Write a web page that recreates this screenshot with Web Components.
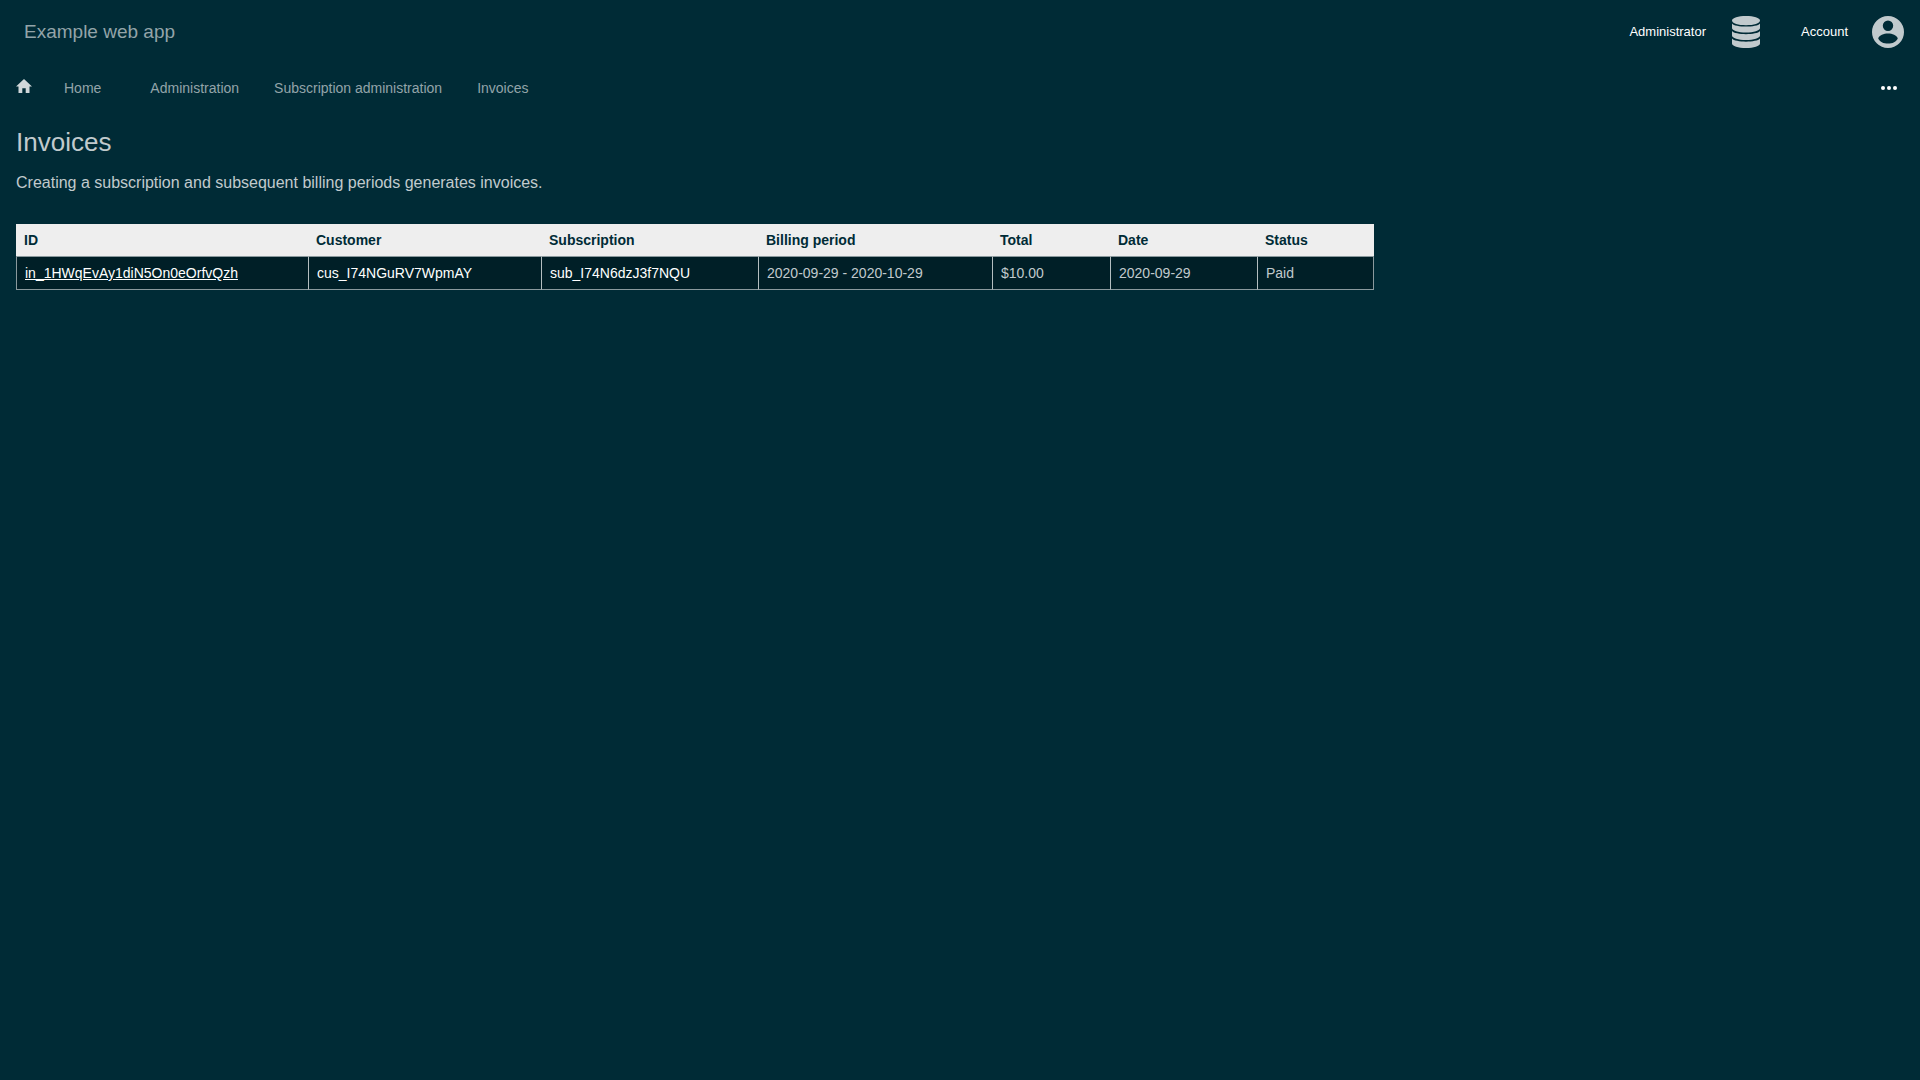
<!DOCTYPE html>
<html lang="en">
<head>
<meta charset="utf-8">
<title>Invoices</title>
<style>
html, body { margin: 0; min-height: 100%; }
body {
  background: #002b36;
  color: #c1cacd;
  font-family: "Liberation Sans", Arial, sans-serif;
  font-size: 16px;
}
</style>
</head>
<body>
<app-shell>
  <app-header slot="header" name="Example web app">
    <header-menu label="Administrator" icon="database"></header-menu>
    <header-menu label="Account" icon="account"></header-menu>
  </app-header>
  <app-navbar slot="nav">
    <a href="#home" class="first">Home</a>
    <a href="#administration">Administration</a>
    <a href="#subscriptions">Subscription administration</a>
    <a href="#invoices">Invoices</a>
  </app-navbar>
  <page-intro heading="Invoices">Creating a subscription and subsequent billing periods generates invoices.</page-intro>
  <invoice-table></invoice-table>
</app-shell>
<script>
const icons = {
  database: '<svg width="28" height="32" viewBox="0 0 28 32" fill="currentColor" aria-hidden="true"><path d="M0 4.500C0 2 6.300 0 14 0S28 2 28 4.500C28 7.500 21.700 9.200 14 9.200S0 7.500 0 4.500Z"/><path d="M0 7.400C3 11.600 25 11.600 28 7.400V12C28 14.500 21.700 16.500 14 16.500S0 14.500 0 12Z"/><path d="M0 15C3 19.200 25 19.200 28 15V19.500C28 22 21.700 24 14 24S0 22 0 19.500Z"/><path d="M0 22.600C3 26.800 25 26.800 28 22.600V27.500C28 30 21.700 32 14 32S0 30 0 27.500Z"/></svg>',
  account: '<svg width="32" height="32" viewBox="0 0 32 32" fill="currentColor" aria-hidden="true"><path fill-rule="evenodd" d="M16 0a16 16 0 1 0 0 32a16 16 0 0 0 0-32ZM16 4.500a5.200 5.200 0 1 1 0 10.400a5.200 5.200 0 0 1 0-10.400ZM6.200 22.200C8.500 15.800 23.500 15.800 25.800 22.200C23.500 29.400 8.500 29.400 6.200 22.200Z"/></svg>'
};

class AppShell extends HTMLElement {
  connectedCallback() {
    this.attachShadow({ mode: 'open' }).innerHTML = `
      <style>
        :host { display: flex; flex-direction: column; }
        main { display: flex; flex-direction: column; align-items: flex-start; gap: 28px; padding: 14px 16px; }
      </style>
      <slot name="header"></slot>
      <slot name="nav"></slot>
      <main><slot></slot></main>`;
  }
}
customElements.define('app-shell', AppShell);

class AppHeader extends HTMLElement {
  connectedCallback() {
    this.attachShadow({ mode: 'open' }).innerHTML = `
      <style>
        :host { display: block; }
        header { display: flex; align-items: center; justify-content: space-between; height: 64px; padding: 0 16px 0 24px; }
        a { color: #93a4a9; font-size: 19px; text-decoration: none; }
        nav { display: flex; gap: 39px; }
      </style>
      <header>
        <a href="#home">${this.getAttribute('name')}</a>
        <nav aria-label="User"><slot></slot></nav>
      </header>`;
  }
}
customElements.define('app-header', AppHeader);

class HeaderMenu extends HTMLElement {
  connectedCallback() {
    this.attachShadow({ mode: 'open' }).innerHTML = `
      <style>
        :host { display: block; }
        button { display: flex; align-items: center; gap: 24px; border: 0; padding: 0; background: none; color: #fff; font: inherit; font-size: 13px; line-height: 16px; cursor: pointer; }
        .icon { display: flex; justify-content: center; width: 32px; color: #c1cacd; }
      </style>
      <button type="button"><span>${this.getAttribute('label')}</span><span class="icon">${icons[this.getAttribute('icon')]}</span></button>`;
  }
}
customElements.define('header-menu', HeaderMenu);

class AppNavbar extends HTMLElement {
  connectedCallback() {
    this.attachShadow({ mode: 'open' }).innerHTML = `
      <style>
        :host { display: block; }
        nav { display: flex; align-items: center; height: 48px; padding: 0 16px; font-size: 14px; }
        ::slotted(a) { color: #93a4a9; text-decoration: none; margin-right: 35px; }
        ::slotted(a.first) { margin-left: 32px; margin-right: 49px; }
        .home { display: flex; color: #d0d7d9; padding-bottom: 4px; }
        button { display: flex; margin-left: auto; width: 30px; height: 32px; padding: 0; border: 0; background: none; color: #fff; align-items: center; justify-content: center; cursor: pointer; }
      </style>
      <nav aria-label="Breadcrumb">
        <a class="home" href="#home" aria-label="Home page"><svg width="16" height="14" viewBox="0 0 16 14" fill="currentColor"><path d="M8 0 16 7.600H13.500V14H9.700V9.200H6.300V14H2.500V7.600H0Z"/></svg></a>
        <slot></slot>
        <button type="button" aria-label="More"><svg width="16" height="4" viewBox="0 0 16 4" fill="currentColor"><circle cx="2" cy="2" r="2"/><circle cx="8" cy="2" r="2"/><circle cx="14" cy="2" r="2"/></svg></button>
      </nav>`;
  }
}
customElements.define('app-navbar', AppNavbar);

class PageIntro extends HTMLElement {
  connectedCallback() {
    this.attachShadow({ mode: 'open' }).innerHTML = `
      <style>
        :host { display: block; }
        h1 { margin: 0 0 12px; font-size: 26px; line-height: 32px; font-weight: normal; }
        p { margin: 0; font-size: 16px; line-height: 26px; }
      </style>
      <h1>${this.getAttribute('heading')}</h1>
      <p><slot></slot></p>`;
  }
}
customElements.define('page-intro', PageIntro);

class InvoiceTable extends HTMLElement {
  connectedCallback() {
    const columns = [['ID', 292], ['Customer', 233], ['Subscription', 217], ['Billing period', 234], ['Total', 118], ['Date', 147], ['Status', 117]];
    const rows = [{
      id: 'in_1HWqEvAy1diN5On0eOrfvQzh',
      customer: 'cus_I74NGuRV7WpmAY',
      subscription: 'sub_I74N6dzJ3f7NQU',
      period: '2020-09-29 - 2020-10-29',
      total: '$10.00',
      date: '2020-09-29',
      status: 'Paid'
    }];
    this.attachShadow({ mode: 'open' }).innerHTML = `
      <style>
        :host { display: block; }
        table { border-collapse: separate; border-spacing: 0; font-size: 14px; line-height: 16px; }
        th, td { box-sizing: border-box; padding: 8px; text-align: left; white-space: nowrap; }
        th { background: #eee; color: #002b36; }
        td { background: #001f27; border: 1px solid #8a999d; border-right: 0; }
        td + td { border-left-color: #b4bec0; }
        td:last-child { border-right: 1px solid #8a999d; }
        a { color: #fff; text-decoration: none; }
        a.invoice { text-decoration: underline; }
      </style>
      <table>
        <colgroup>${columns.map(([, w]) => `<col style="width:${w}px">`).join('')}</colgroup>
        <thead><tr>${columns.map(([c]) => `<th scope="col">${c}</th>`).join('')}</tr></thead>
        <tbody>${rows.map(r => `<tr>
          <td><a class="invoice" href="#${r.id}">${r.id}</a></td>
          <td><a href="#${r.customer}">${r.customer}</a></td>
          <td><a href="#${r.subscription}">${r.subscription}</a></td>
          <td>${r.period}</td><td>${r.total}</td><td>${r.date}</td><td>${r.status}</td>
        </tr>`).join('')}</tbody>
      </table>`;
  }
}
customElements.define('invoice-table', InvoiceTable);
</script>
</body>
</html>
